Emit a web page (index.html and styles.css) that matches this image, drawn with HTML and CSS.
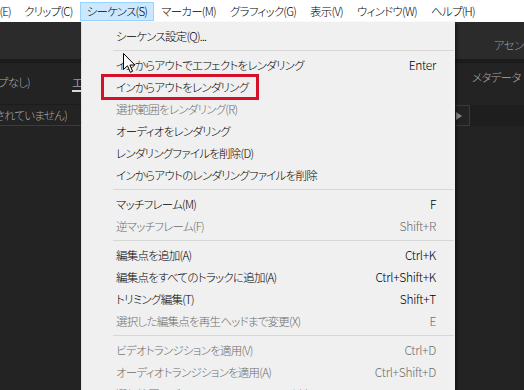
FILE: index.html
```html
<!DOCTYPE html>
<html lang="ja">
<head>
<meta charset="UTF-8">
<title>シーケンス メニュー</title>
<link rel="stylesheet" href="styles.css">
</head>
<body>

<div class="menubar">
    <div class="mb-clip"><span>編集(E)</span></div>
    <span class="mb-item">クリップ(C)</span>
    <span class="mb-item active">シーケンス(S)</span>
    <span class="mb-item">マーカー(M)</span>
    <span class="mb-item">グラフィック(G)</span>
    <span class="mb-item">表示(V)</span>
    <span class="mb-item">ウィンドウ(W)</span>
    <span class="mb-item">ヘルプ(H)</span>
</div>

<div class="workspace">
    <div class="topbar">
        <span class="ws-tab">アセンブリ</span>
    </div>
    <div class="panels">
        <div class="panel left">
            <div class="panel-head">
                <div class="clip-end"><span>(クリップなし)</span></div>
                <span class="tab current">エフェクトコントロール</span>
            </div>
            <div class="panel-row">
                <div class="clip-end wide"><span>(シーケンスが選択されていません)</span></div>
            </div>
        </div>
        <div class="panel right">
            <div class="panel-head">
                <span class="tab">メタデータ</span>
            </div>
            <div class="panel-row">
                <span class="expander">
                    <svg width="6" height="8" viewBox="0 0 6 8"><path d="M0 0 L6 4 L0 8 Z" fill="#8a8a8a"/></svg>
                </span>
            </div>
        </div>
    </div>

    <!-- open シーケンス menu -->
    <div class="dropdown">
        <div class="item">シーケンス設定(Q)...</div>
        <div class="sep"></div>
        <div class="item">インからアウトでエフェクトをレンダリング<span class="key">Enter</span></div>
        <div class="item">インからアウトをレンダリング</div>
        <div class="item off">選択範囲をレンダリング(R)</div>
        <div class="item">オーディオをレンダリング</div>
        <div class="item">レンダリングファイルを削除(D)</div>
        <div class="item">インからアウトのレンダリングファイルを削除</div>
        <div class="sep"></div>
        <div class="item">マッチフレーム(M)<span class="key">F</span></div>
        <div class="item off">逆マッチフレーム(F)<span class="key">Shift+R</span></div>
        <div class="sep"></div>
        <div class="item">編集点を追加(A)<span class="key">Ctrl+K</span></div>
        <div class="item">編集点をすべてのトラックに追加(A)<span class="key">Ctrl+Shift+K</span></div>
        <div class="item">トリミング編集(T)<span class="key">Shift+T</span></div>
        <div class="item off">選択した編集点を再生ヘッドまで変更(X)<span class="key">E</span></div>
        <div class="sep"></div>
        <div class="item off">ビデオトランジションを適用(V)<span class="key">Ctrl+D</span></div>
        <div class="item off">オーディオトランジションを適用(A)<span class="key">Ctrl+Shift+D</span></div>
        <div class="item off">選択範囲にデフォルトのトランジションを適用</div>
    </div>

    <div class="highlight"></div>

    <svg class="cursor" width="13" height="21" viewBox="0 0 13 21">
        <path d="M0.5 0.5 L0.5 16.5 L4.5 12.8 L7.3 19.3 L9.6 18.3 L6.9 12 L11.8 12 Z" fill="#fff" stroke="#000" stroke-width="1" stroke-linejoin="round"/>
    </svg>
</div>

</body>
</html>
```

FILE: styles.css
```css
* {
    box-sizing: border-box;
}

body {
    margin: 0;
    width: 524px;
    height: 390px;
    overflow: hidden;
    background: #232323;
    font-family: "Noto Sans CJK JP", "Noto Sans", sans-serif;
    font-feature-settings: "palt";
    font-size: 11.5px;
    font-weight: 300;
    letter-spacing: -0.75px;
}

/* menu bar */
.menubar {
    display: flex;
    align-items: center;
    height: 22px;
    background: #ffffff;
    color: #000;
    overflow: hidden;
}

.mb-clip {
    display: flex;
    justify-content: flex-end;
    flex-shrink: 0;
    width: 17px;
    padding-right: 6px;
    overflow: hidden;
    white-space: nowrap;
}

.mb-item {
    flex-shrink: 0;
    height: 19px;
    line-height: 17px;
    padding: 0 6px;
    border: 1px solid transparent;
    white-space: nowrap;
}

.mb-item.active {
    background: #cce8ff;
    border-color: #99d1ff;
}

/* dark application area */
.workspace {
    position: relative;
    height: 368px;
}

.topbar {
    display: flex;
    justify-content: flex-end;
    height: 41px;
    padding-top: 15px;
    background: #2b2b2b;
    border-bottom: 4px solid #1b1b1b;
    overflow: hidden;
    white-space: nowrap;
}

.ws-tab {
    color: #9c9c9c;
    margin-right: -17px;
}

.panels {
    display: flex;
    justify-content: space-between;
}

.panel {
    overflow: hidden;
    white-space: nowrap;
}

.panel.left {
    width: 120px;
}

.panel.right {
    width: 69px;
}

.panel-head {
    display: flex;
    align-items: center;
    height: 42px;
    padding-bottom: 4px;
    color: #a8a8a8;
    border-bottom: 1px solid #1c1c1c;
}

.panel.left .panel-head {
    gap: 42px;
}

.panel.right .panel-head {
    padding-left: 17px;
    padding-bottom: 14px;
    border-bottom: none;
}

.clip-end {
    display: flex;
    justify-content: flex-end;
    width: 30px;
    overflow: hidden;
    flex-shrink: 0;
}

.clip-end.wide {
    width: 67px;
}

.tab.current {
    padding-top: 2px;
    border-bottom: 2px solid #d8d8d8;
    color: #d0d0d0;
}

.panel-row {
    display: flex;
    align-items: center;
    height: 21px;
    color: #a8a8a8;
    border-bottom: 1px solid #3a3a3a;
}

.panel.right .panel-row {
    border-bottom: none;
    background: #1e1e1e;
}

.expander {
    display: flex;
    align-items: center;
    justify-content: center;
    width: 15px;
    height: 21px;
    padding-right: 6px;
    border: 1px solid #3a3a3a;
    border-left: none;
    background: #232323;
}

/* dropdown menu */
.dropdown {
    position: absolute;
    top: 0;
    left: 81px;
    width: 374px;
    height: 380px;
    padding: 3px 0 0 1px;
    background: #f0f0f0;
    border-left: 1px solid #e2e2e2;
    box-shadow: 2px 2px 3px rgba(0, 0, 0, 0.45);
    color: #000;
}

.item {
    display: flex;
    height: 22px;
    line-height: 22px;
    padding: 0 19px 0 33px;
    white-space: nowrap;
}

.item.off {
    color: #6d6d6d;
}

.key {
    margin-left: auto;
    font-size: 12px;
    letter-spacing: -0.3px;
}

.sep {
    height: 1px;
    margin: 3px 1px 3px 30px;
    background: #d7d7d7;
}

/* annotation box */
.highlight {
    position: absolute;
    left: 101px;
    top: 52px;
    width: 158px;
    height: 26px;
    border: 3px solid #d4102a;
}

.cursor {
    position: absolute;
    left: 123px;
    top: 31px;
}
```
